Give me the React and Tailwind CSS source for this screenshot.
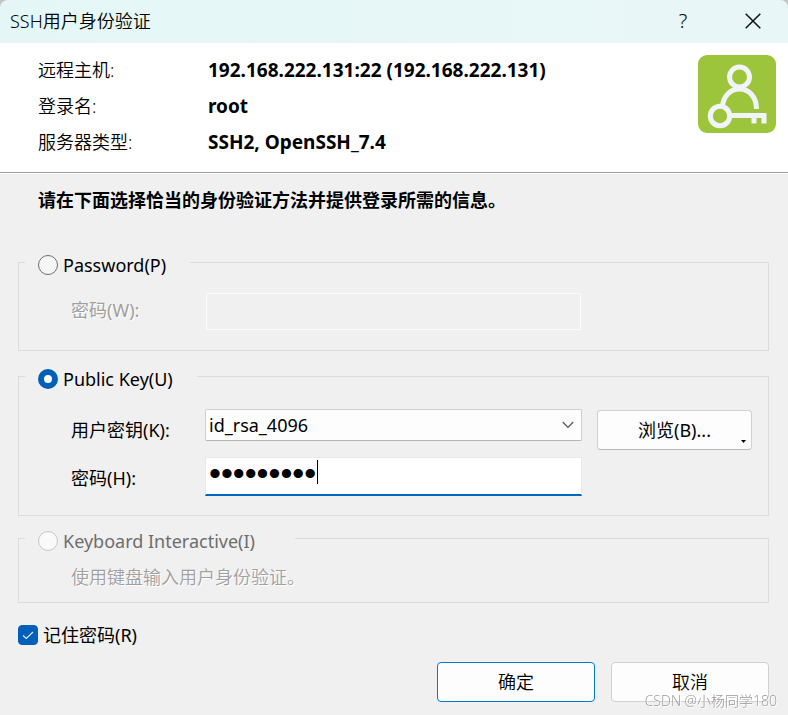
const fontStack = "font-['Noto_Sans','Noto_Sans_CJK_SC',sans-serif]";

const connection = [
  { label: '远程主机:', value: '192.168.222.131:22 (192.168.222.131)' },
  { label: '登录名:', value: 'root' },
  { label: '服务器类型:', value: 'SSH2, OpenSSH_7.4' },
];

function UserKeyLogo() {
  return (
    <svg className="size-[78px] shrink-0" viewBox="0 0 78 78" fill="none" aria-hidden="true">
      <rect width="78" height="78" rx="9" fill="#9dc53b" />
      <g stroke="#f1f4fb" strokeWidth="5">
        <circle cx="41.500" cy="22" r="10" />
        <path d="M24.500 51C25.500 41 32.500 34 41.500 34C51 34 58.500 42 58.500 54" />
        <circle cx="22" cy="61" r="9.700" />
        <path d="M32 60.500H66V68.500M56 60.500V68.500" />
      </g>
    </svg>
  );
}

function TitleBar() {
  return (
    <header className="bg-[#c4c4c4]">
      <div className="flex h-[43px] items-center rounded-t-[8px] bg-linear-to-r from-[#e4f7f6] to-[#e9f6f8] pl-[10px]">
        <h1 className="flex-1 pb-[2px] text-[18px] font-[350]">SSH用户身份验证</h1>
        <button type="button" aria-label="帮助" className="flex h-full w-[70px] items-center justify-center pb-[2px] text-[20px] font-light">
          ?
        </button>
        <button type="button" aria-label="关闭" className="flex h-full w-[70px] items-center justify-center pb-[2px]">
          <svg className="size-4" viewBox="0 0 16 16" fill="none" stroke="#111" strokeWidth="1.500" aria-hidden="true">
            <path d="M.7.7l14.600 14.600M15.300.7L.7 15.300" />
          </svg>
        </button>
      </div>
    </header>
  );
}

function MethodGroup({ id, title, checked, disabled, children, className }) {
  return (
    <fieldset className={`min-w-0 border border-[#dcdcdc] ${className}`}>
      <legend className={`ml-[6px] flex h-[26px] items-end pl-[13px] ${disabled ? 'pr-10' : 'pr-6'}`}>
        <input
          id={id}
          type="radio"
          name="method"
          defaultChecked={checked}
          disabled={disabled}
          className="size-5 appearance-none rounded-full border border-[#6e6e6e] bg-[#f6f6f6] checked:border-[6px] checked:border-[#005fb8] checked:bg-white disabled:border-[#c4c4c4] disabled:bg-[#fafafa]"
        />
        <label htmlFor={id} className={`pl-[5px] leading-5 ${disabled ? 'text-[#6d6d6d]' : ''}`}>
          {title}
        </label>
      </legend>
      {children}
    </fieldset>
  );
}

const gridCols = 'grid grid-cols-[135px_minmax(0,1fr)_155px] pl-[52px] pr-4';
const etched = 'text-[#a0a0a0] [text-shadow:1px_1px_0_#fff]';

export default function App() {
  return (
    <div className={`flex min-h-screen flex-col bg-[#f0f0f0] text-[18px] leading-6 text-black ${fontStack}`}>
      <TitleBar />

      <section className="flex items-start justify-between border-b border-[#a0a0a0] bg-white pt-[9px] pr-3 pb-3 pl-[38px]">
        <dl className="grid grid-cols-[170px_auto] leading-9">
          {connection.map((row) => (
            <div key={row.label} className="contents">
              <dt className="font-[350]">{row.label}</dt>
              <dd className="text-[19px] font-bold">{row.value}</dd>
            </div>
          ))}
        </dl>
        <div className="pt-[3px]">
          <UserKeyLogo />
        </div>
      </section>

      <form className="flex flex-1 flex-col border-t border-white pt-[14px] pr-[19px] pl-[18px]">
        <p className="pl-5 font-bold">请在下面选择恰当的身份验证方法并提供登录所需的信息。</p>

        <MethodGroup id="m-password" title="Password(P)" className="mt-[37px] pb-5">
          <div className={`${gridCols} items-center pt-[18px]`}>
            <label htmlFor="password-w" className={`pb-1 ${etched}`}>密码(W):</label>
            <input
              id="password-w"
              type="password"
              disabled
              className="mr-4 h-[37px] border border-[#fbfbfb] bg-[#f0f0f0]"
            />
          </div>
        </MethodGroup>

        <MethodGroup id="m-key" title="Public Key(U)" checked className="mt-3 pb-[19px]">
          <div className={`${gridCols} gap-y-[7px] pt-5`}>
            <label htmlFor="user-key" className="self-center">用户密钥(K):</label>
            <div className="relative mr-[15px] -ml-px h-8">
              <select
                id="user-key"
                className="block h-8 w-full appearance-none rounded-xs border border-[#cfcfcf] border-b-[#b5b5b5] bg-[#fdfdfd] px-[3px]"
              >
                <option>id_rsa_4096</option>
              </select>
              <svg
                className="pointer-events-none absolute top-3 right-2 h-2 w-3"
                viewBox="0 0 12 8"
                fill="none"
                stroke="#555"
                strokeWidth="1.200"
                aria-hidden="true"
              >
                <path d="M.7 1l5.300 5.300L11.300 1" />
              </svg>
            </div>
            <button
              type="button"
              className="relative mt-px h-10 rounded-[4px] border border-[#d0d0d0] border-b-[#b8b8b8] bg-[#fdfdfd]"
            >
              浏览(B)...
              <svg className="absolute right-[5px] bottom-[6px] h-[3px] w-[5px]" viewBox="0 0 5 3" aria-hidden="true">
                <path d="M0 0h5L2.500 3z" fill="#000" />
              </svg>
            </button>

            <label htmlFor="password-h" className="self-center pt-[2px]">密码(H):</label>
            <div className="relative mr-[15px] -ml-px">
              <input
                id="password-h"
                type="password"
                defaultValue="xshellkey"
                className="block h-[39px] w-full border border-[#e6e9ee] border-b-2 border-b-[#0067c0] bg-white px-[3px] pb-[6px] font-['Liberation_Sans',sans-serif] text-[34px] leading-8 outline-none"
              />
              <span className="absolute top-[3px] left-28 h-6 w-px bg-black" />
            </div>
          </div>
        </MethodGroup>

        <MethodGroup id="m-keyboard" title="Keyboard Interactive(I)" disabled className="mt-[9px] pb-[13px]">
          <p className={`pt-[14px] pl-[52px] font-[350] ${etched}`}>使用键盘输入用户身份验证。</p>
        </MethodGroup>

        <div className="mt-5 flex items-center">
          <span className="relative flex size-5">
            <input
              id="remember"
              type="checkbox"
              defaultChecked
              className="size-5 appearance-none rounded-[4px] border border-[#005fb8] checked:bg-[#005fb8]"
            />
            <svg
              className="pointer-events-none absolute inset-0 size-5"
              viewBox="0 0 20 20"
              fill="none"
              stroke="#e6f0fa"
              strokeWidth="1.100"
              aria-hidden="true"
            >
              <path d="M5 10.500l3.300 3L15 7" />
            </svg>
          </span>
          <label htmlFor="remember" className="pl-[5px]">记住密码(R)</label>
        </div>

        <div className="mt-[15px] flex justify-end gap-4">
          <button type="submit" className="h-10 w-[158px] rounded-[4px] border border-[#0078d4] bg-[#fdfdfd] font-[350]">
            确定
          </button>
          <button type="button" className="h-10 w-[158px] rounded-[4px] border border-[#d0d0d0] bg-[#fdfdfd] font-[350]">
            取消
          </button>
        </div>
      </form>

      <span className="pointer-events-none fixed right-[11px] bottom-1 font-['Open_Sans','Noto_Sans_CJK_SC',sans-serif] text-[14px] leading-5 font-light text-[#999] [text-shadow:1px_1px_0_#fff]">
        CSDN @小杨同学180
      </span>
    </div>
  );
}
